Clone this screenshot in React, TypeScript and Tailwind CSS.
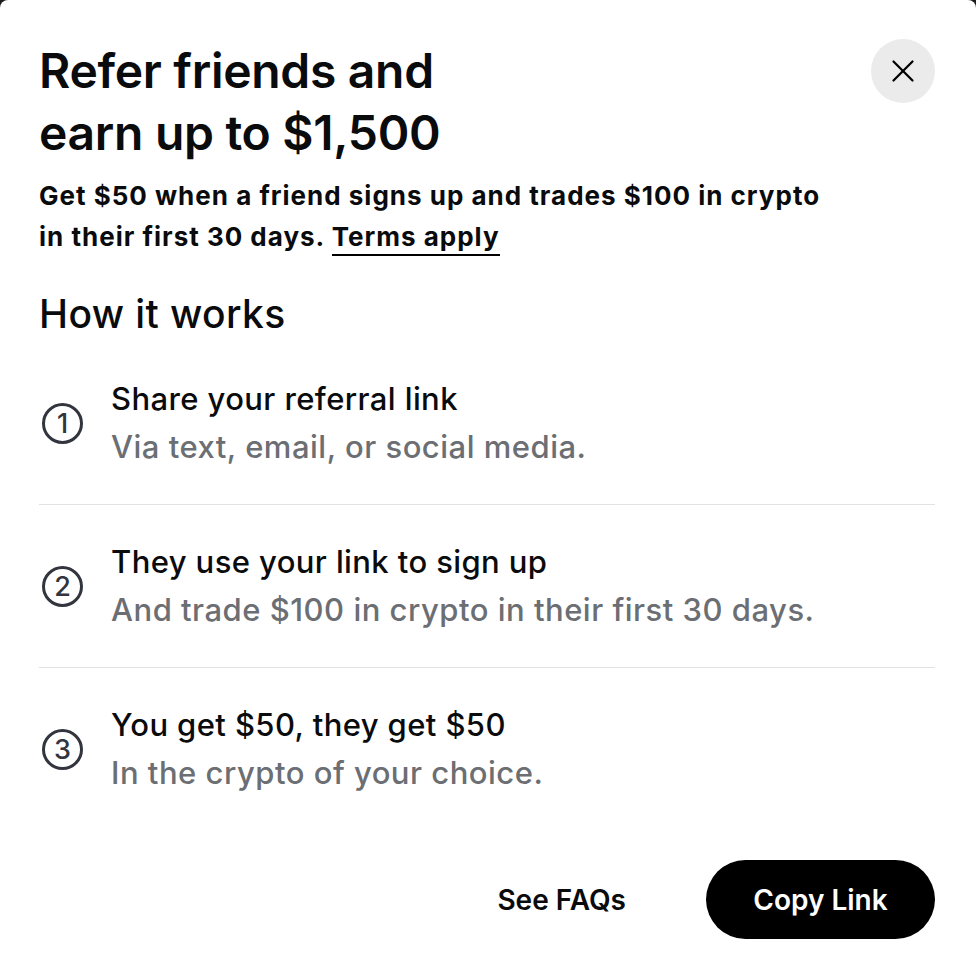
import { X } from 'lucide-react';

const steps = [
  {
    n: '1',
    title: 'Share your referral link',
    sub: 'Via text, email, or social media.',
  },
  {
    n: '2',
    title: 'They use your link to sign up',
    sub: 'And trade $100 in crypto in their first 30 days.',
  },
  {
    n: '3',
    title: 'You get $50, they get $50',
    sub: 'In the crypto of your choice.',
  },
];

export default function App() {
  return (
    <div className="min-h-screen bg-[#1c1c1c] font-['Inter',sans-serif] text-[#0a0b0d]">
      <div className="bg-white rounded-t-lg min-h-[970px] pl-[39px] pr-[41px] pt-[39px]">
        {/* Header */}
        <div className="flex justify-between items-start">
          <h1 className="text-[48px] leading-[62px] font-semibold tracking-[-0.3px] mt-[1px]">
            Refer friends and
            <br />
            earn up to $1,500
          </h1>
          <button className="w-16 h-16 rounded-full bg-[#ebebeb] flex items-center justify-center">
            <X size={38} strokeWidth={1.4} className="text-black" />
          </button>
        </div>

        <p className="text-[26px] leading-[41px] font-bold tracking-[1px] mt-[11px]">
          Get $50 when a friend signs up and trades $100 in crypto
          <br />
          in their first 30 days.{' '}
          <a className="border-b-2 border-black pb-[2px]">Terms apply</a>
        </p>

        <h2 className="text-[39px] leading-[46px] font-medium tracking-[0.4px] mt-[34px]">
          How it works
        </h2>

        {/* Steps */}
        <div className="mt-[22px]">
          {steps.map((s, i) => (
            <div
              key={s.n}
              className={`flex items-center gap-[28px] ${
                i === 0 ? 'pt-[20px] pb-[37px]' : 'py-[37px]'
              } ${i < steps.length - 1 ? 'border-b border-[#e2e2e2]' : ''}`}
            >
              <div className="w-[41px] h-[41px] shrink-0 ml-[3px] rounded-full border-[3px] border-[#32353d] flex items-center justify-center text-[#32353d] text-[27px] font-medium leading-none">
                {s.n}
              </div>
              <div>
                <div className="text-[31px] leading-[40px] font-medium tracking-[0.4px]">{s.title}</div>
                <div className="text-[31px] leading-[40px] font-medium tracking-[0.5px] text-[#6b6e73] mt-[8px]">
                  {s.sub}
                </div>
              </div>
            </div>
          ))}
        </div>

        {/* Actions */}
        <div className="flex justify-end items-center mt-[30px]">
          <button className="text-[28px] font-semibold pl-4 pr-[80px] h-[79px]">See FAQs</button>
          <button className="bg-black text-white text-[28px] font-semibold rounded-full w-[229px] h-[79px]">
            Copy Link
          </button>
        </div>
      </div>
    </div>
  );
}
